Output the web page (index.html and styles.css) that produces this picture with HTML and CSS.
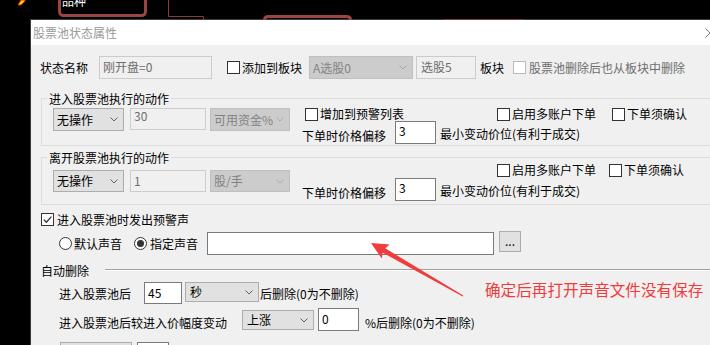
FILE: index.html
```html
<!DOCTYPE html>
<html lang="zh-CN">
<head>
<meta charset="utf-8">
<title>股票池状态属性</title>
<link rel="stylesheet" href="styles.css">
</head>
<body>
<div class="desk">
  <svg class="bg" width="710" height="20" viewBox="0 0 710 20">
    <polygon points="18,5 21,5 25,1 25,0 21,0" fill="#ffd200" stroke="#e02a00" stroke-width="1"/>
    <rect x="59.5" y="-12" width="86" height="27.5" rx="4" fill="none" stroke="#9a4444" stroke-width="3"/>
    <text x="62" y="6" fill="#ffffff" font-size="12" font-family="Noto Sans CJK SC, sans-serif">品种</text>
    <path d="M168.5 0 V16.5 H203.5 V20" fill="none" stroke="#8a3c3c"/>
    <path d="M264.5 20 Q264.5 16.5 268.5 16.5 H346.5 Q350.5 16.5 350.5 20" fill="none" stroke="#9a4444" stroke-width="3"/>
    <line x1="444" y1="19.5" x2="524" y2="19.5" stroke="#7a3c3c"/>
  </svg>

  <div class="dialog">
    <div class="titlebar">
      <span class="title">股票池状态属性</span>
      <svg class="close" width="10" height="10" viewBox="0 0 10 10"><path d="M0.5 0.5 L9.5 9.5 M9.5 0.5 L0.5 9.5" stroke="#808080" fill="none"/></svg>
    </div>
    <div class="body">
      <div class="row r1">
        <span class="t">状态名称</span>
        <span class="edit dis name">刚开盘=0</span>
        <span class="chk add"><i class="box"></i>添加到板块</span>
        <span class="combo dis blk">A选股0<svg class="chev" width="8" height="5" viewBox="0 0 8 5"><path d="M0.5 0.5 L4 4 L7.5 0.5" fill="none" stroke="currentColor"/></svg></span>
        <span class="edit dis blk2">选股5</span>
        <span class="t bk">板块</span>
        <span class="chk dis del"><i class="box"></i>股票池删除后也从板块中删除</span>
      </div>

      <div class="group g1">
        <div class="legend">进入股票池执行的动作</div>
        <div class="gbody">
          <div class="gleft">
            <span class="combo op">无操作<svg class="chev" width="8" height="5" viewBox="0 0 8 5"><path d="M0.5 0.5 L4 4 L7.5 0.5" fill="none" stroke="currentColor"/></svg></span>
            <span class="edit dis qty top">30</span>
            <span class="combo dis unit">可用资金%<svg class="chev" width="8" height="5" viewBox="0 0 8 5"><path d="M0.5 0.5 L4 4 L7.5 0.5" fill="none" stroke="currentColor"/></svg></span>
          </div>
          <div class="gright">
            <div class="row opts">
              <span class="chk warn"><i class="box"></i>增加到预警列表</span>
              <span class="chk multi"><i class="box"></i>启用多账户下单</span>
              <span class="chk confirm"><i class="box"></i>下单须确认</span>
            </div>
            <div class="row price">
              <span class="t plabel">下单时价格偏移</span>
              <span class="edit off">3</span>
              <span class="t tick">最小变动价位(有利于成交)</span>
            </div>
          </div>
        </div>
      </div>

      <div class="group g2">
        <div class="legend">离开股票池执行的动作</div>
        <div class="gbody">
          <div class="gleft">
            <span class="combo op">无操作<svg class="chev" width="8" height="5" viewBox="0 0 8 5"><path d="M0.5 0.5 L4 4 L7.5 0.5" fill="none" stroke="currentColor"/></svg></span>
            <span class="edit dis qty">1</span>
            <span class="combo dis unit">股/手<svg class="chev" width="8" height="5" viewBox="0 0 8 5"><path d="M0.5 0.5 L4 4 L7.5 0.5" fill="none" stroke="currentColor"/></svg></span>
          </div>
          <div class="gright">
            <div class="row opts">
              <span class="chk multi"><i class="box"></i>启用多账户下单</span>
              <span class="chk confirm"><i class="box"></i>下单须确认</span>
            </div>
            <div class="row price">
              <span class="t plabel">下单时价格偏移</span>
              <span class="edit off">3</span>
              <span class="t tick">最小变动价位(有利于成交)</span>
            </div>
          </div>
        </div>
      </div>

      <div class="row alarm">
        <span class="chk"><i class="box on"><svg width="11" height="11" viewBox="0 0 11 11"><path d="M1.8 5.6 L4.4 8.2 L9.4 2.6" fill="none" stroke="#333" stroke-width="1.3"/></svg></i>进入股票池时发出预警声</span>
      </div>

      <div class="row sound">
        <span class="radio r-def"><i class="dot"></i>默认声音</span>
        <span class="radio on r-set"><i class="dot"></i>指定声音</span>
        <span class="edit path"></span>
        <span class="btn browse">...</span>
      </div>

      <div class="row auto-head">
        <span class="t">自动删除</span>
        <span class="rule"></span>
      </div>

      <div class="row del-time">
        <span class="t lab">进入股票池后</span>
        <span class="edit sec-edit">45</span>
        <span class="combo sec-combo">秒<svg class="chev" width="8" height="5" viewBox="0 0 8 5"><path d="M0.5 0.5 L4 4 L7.5 0.5" fill="none" stroke="currentColor"/></svg></span>
        <span class="t after">后删除(0为不删除)</span>
      </div>

      <div class="row del-move">
        <span class="t lab lab2">进入股票池后较进入价幅度变动</span>
        <span class="combo up-combo">上涨<svg class="chev" width="8" height="5" viewBox="0 0 8 5"><path d="M0.5 0.5 L4 4 L7.5 0.5" fill="none" stroke="currentColor"/></svg></span>
        <span class="edit pct-edit">0</span>
        <span class="t after2">%后删除(0为不删除)</span>
      </div>

      <div class="row more">
        <span class="btn more-btn"></span>
        <span class="edit more-edit"></span>
      </div>
    </div>
  </div>

  <svg class="arrow" width="710" height="345" viewBox="0 0 710 345">
    <polygon points="371,243 389.7,244.6 385.2,248.3 463.3,295.5 462.7,296.5 382.7,252.7 381.7,258.4" fill="#f03c3c"/>
  </svg>
  <div class="note">确定后再打开声音文件没有保存</div>
</div>
</body>
</html>
```
FILE: styles.css
```css
* { box-sizing: border-box; margin: 0; padding: 0; }
html, body { width: 710px; height: 345px; overflow: hidden; background: #000; }
body {
  font-family: "Noto Sans CJK SC", "Noto Sans", sans-serif;
  font-size: 12px;
  line-height: 14px;
  color: #000;
}
i { font-style: normal; }

.desk { position: relative; width: 710px; height: 345px; overflow: hidden; background: #000; }
.bg { position: absolute; left: 0; top: 0; z-index: 2; }

.dialog {
  position: absolute;
  left: 30px;
  top: 19px;
  width: 700px;
  height: 340px;
  border-top: 1px solid #3c3c3c;
  border-left: 1px solid #3c3c3c;
  background: #f0f0f0;
  overflow: hidden;
}
.titlebar {
  height: 25px;
  background: #fff;
  display: flex;
  align-items: center;
  justify-content: space-between;
  padding-left: 2px;
}
.title { color: #9a9a9a; }
.close { margin-right: 15px; }

.body { padding: 11px 0 0 10px; }
.row { display: flex; align-items: center; white-space: nowrap; }
.t { white-space: nowrap; }

/* controls */
.edit {
  display: block;
  height: 23px;
  border: 1px solid #7a7a7a;
  background: #fff;
  padding: 0 3px;
  line-height: 20px;
  white-space: nowrap;
  overflow: hidden;
  flex: none;
}
.edit.dis { border-color: #cccccc; background: #f0f0f0; color: #6d6d6d; }
.edit.top { line-height: 14px; padding-top: 0; }

.combo {
  display: flex;
  align-items: center;
  justify-content: space-between;
  height: 23px;
  border: 1px solid #adadad;
  background: #e1e1e1;
  padding: 0 5px 0 3px;
  white-space: nowrap;
  overflow: hidden;
  flex: none;
  color: #000;
}
.combo.dis { background: #cccccc; border-color: #bfbfbf; color: #838383; }
.chev { flex: none; color: #606060; margin-left: 2px; }
.combo.dis .chev { color: #a8a8a8; }

.btn {
  display: flex;
  align-items: center;
  justify-content: center;
  border: 1px solid #adadad;
  background: #e1e1e1;
  flex: none;
}

.chk { display: flex; align-items: center; white-space: nowrap; }
.box {
  display: block;
  width: 13px;
  height: 13px;
  border: 1px solid #333;
  background: #fff;
  margin-right: 2px;
  flex: none;
}
.box svg { display: block; }
.chk.dis { color: #6d6d6d; }
.chk.dis .box { border-color: #bcbcbc; margin-right: 3px; }

.radio { display: flex; align-items: center; white-space: nowrap; }
.dot {
  display: flex;
  align-items: center;
  justify-content: center;
  width: 13px;
  height: 13px;
  border: 1px solid #333;
  border-radius: 50%;
  background: #fff;
  margin-right: 2px;
  flex: none;
}
.radio.on .dot::after {
  content: "";
  width: 7px;
  height: 7px;
  border-radius: 50%;
  background: #333;
}

/* row 1 */
.r1 { height: 23px; margin-left: -1px; }
.name { margin-left: 11px; width: 113px; }
.add { margin-left: 15px; }
.blk { margin-left: 7px; width: 104px; }
.blk2 { margin-left: 3px; width: 60px; padding-left: 4px; }
.bk { margin-left: 4px; }
.del { margin-left: 9px; }

/* group boxes */
.group { border: 1px solid #dcdcdc; }
.g1 { margin-top: 19px; }
.g2 { margin-top: 11px; }
.legend {
  width: max-content;
  margin: -7px 0 0 5px;
  padding: 0 2px;
  background: #f0f0f0;
  line-height: 14px;
}
.gbody { display: flex; align-items: flex-start; padding-left: 11px; }
.g1 .gbody { padding-top: 1px; padding-bottom: 1px; }
.g2 .gbody { padding-bottom: 3px; }
.gleft { display: flex; align-items: flex-start; }
.g1 .gleft { margin-top: 1px; }
.g2 .gleft { margin-top: 5px; }
.op { width: 71px; }
.qty { margin-left: 6px; width: 76px; height: 22px; }
.unit { margin-left: 4px; width: 80px; }
.g2 .op, .g2 .unit { height: 22px; }

.gright { margin-left: 12px; }
.g2 .gright { margin-top: -2px; }
.opts { height: 14px; }
.warn { margin-left: 3px; }
.g1 .multi { margin-left: 93px; }
.g2 .multi { margin-left: 195px; }
.g1 .confirm { margin-left: 16px; }
.g2 .confirm { margin-left: 13px; }
.price { height: 23px; margin-top: 0; }
.g2 .price { margin-top: 1px; }
.plabel { padding-top: 6px; }
.off { margin-left: 9px; width: 41px; line-height: 17px; }
.tick { margin-left: 4px; padding-top: 2px; }

/* alarm */
.alarm { margin-top: 8px; height: 13px; }
.alarm .box { margin-right: 3px; }
.sound { margin-top: 6px; height: 23px; }
.r-def { margin-left: 18px; }
.r-set { margin-left: 12px; }
.r-set .dot { margin-right: 3px; }
.path { margin-left: 9px; width: 287px; }
.browse {
  margin-left: 5px;
  width: 22px;
  height: 21px;
  align-self: flex-start;
  margin-top: -1px;
  line-height: 14px;
  padding-bottom: 1px;
}

/* auto delete */
.auto-head { margin-top: 9px; height: 14px; align-items: flex-start; }
.rule {
  flex: 1;
  margin-left: 16px;
  margin-top: 5px;
  height: 2px;
  border-top: 1px solid #a0a0a0;
  border-bottom: 1px solid #ffffff;
}
.del-time { margin-top: 4px; height: 22px; align-items: flex-start; }
.lab { margin-left: 18px; line-height: 22px; padding-top: 1px; }
.sec-edit { margin-left: 13px; width: 38px; height: 22px; }
.sec-combo { margin-left: 3px; width: 74px; height: 20px; padding-left: 4px; }
.after { margin-left: 1px; line-height: 22px; padding-top: 1px; }

.del-move { margin-top: 4px; height: 23px; align-items: flex-start; }
.lab2 { line-height: 23px; padding-top: 3px; }
.up-combo { margin-left: 15px; width: 72px; height: 20px; margin-top: 2px; padding-left: 4px; }
.pct-edit { margin-left: 4px; width: 41px; height: 23px; }
.after2 { margin-left: 6px; line-height: 23px; padding-top: 3px; }

.more { margin-top: 11px; align-items: flex-start; }
.more-btn { margin-left: 19px; width: 72px; height: 20px; }
.more-edit { margin-left: 5px; width: 32px; height: 20px; }

/* annotation */
.arrow { position: absolute; left: 0; top: 0; z-index: 3; pointer-events: none; }
.note {
  position: absolute;
  left: 485px;
  top: 280px;
  z-index: 3;
  color: #f23a3a;
  font-size: 15.6px;
  line-height: 18px;
  white-space: nowrap;
}
```
